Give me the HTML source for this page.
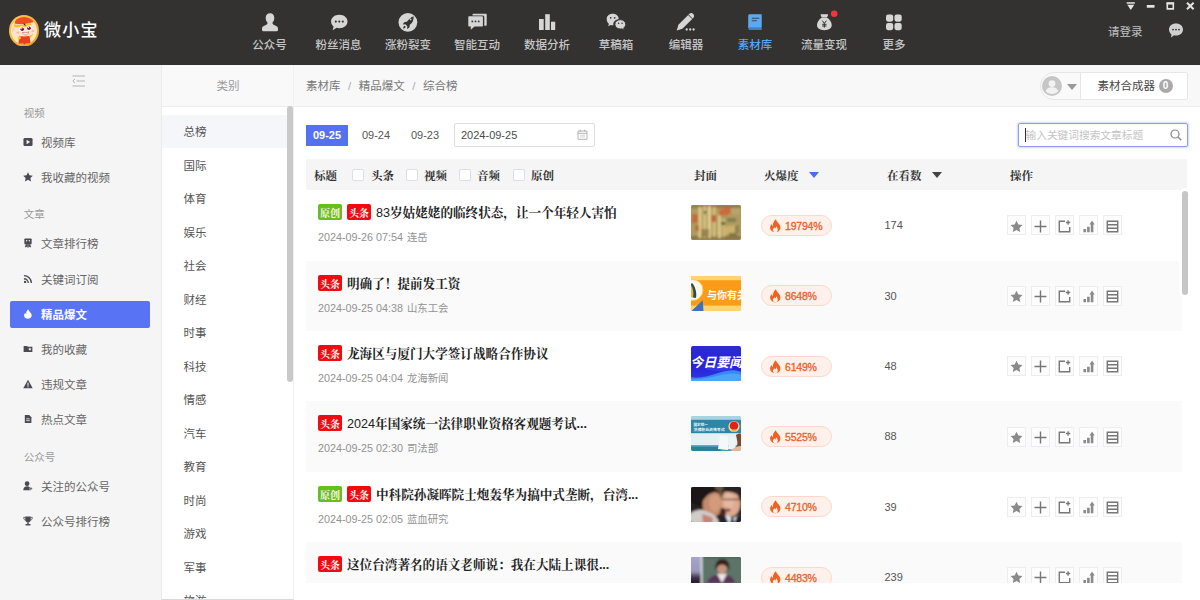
<!DOCTYPE html>
<html lang="zh-CN">
<head>
<meta charset="utf-8">
<title>微小宝</title>
<style>
*{box-sizing:border-box;margin:0;padding:0}
html,body{width:1200px;height:600px;overflow:hidden;background:#fff}
body{font-family:"Liberation Sans","Noto Sans CJK SC",sans-serif;font-size:12px;color:#666;position:relative}
.abs{position:absolute}
/* header */
#hd{position:absolute;z-index:5;left:0;top:0;width:1200px;height:64.500px;background:#333231}
#logo{position:absolute;left:8.5px;top:14.5px;width:30px;height:31.5px}
#brand{position:absolute;left:44px;top:17.500px;font-size:17px;line-height:26px;color:#fff;letter-spacing:1.300px;font-weight:500}
.nav{position:absolute;top:0;width:70px;height:64px;text-align:center;color:#c6c6c6}
.nav svg{position:absolute;left:23px;top:9.5px;width:24px;height:24px}
.nav span{position:absolute;left:-10px;right:-10px;top:36.800px;line-height:16px;font-size:11.5px;font-weight:500}
.nav.on{color:#58a6f6}
#login{position:absolute;left:1108px;top:23px;line-height:18px;color:#c2c2c2;font-size:11.5px}
/* sidebar */
#sb{position:absolute;left:0;top:64px;width:162px;height:536px;background:#f5f5f5}
.sec{position:absolute;left:23.700px;font-size:10.5px;line-height:16px;color:#999;margin-top:0.600px}
.it{position:absolute;left:10px;width:140px;height:27px;line-height:29px;color:#666;font-size:11.5px;padding-left:31px}
.it svg{position:absolute;left:13.400px;top:8px;width:10px;height:10px}
.it.on{background:#5874f5;color:#fff;font-weight:bold;border-radius:2px}
/* category */
#cat{position:absolute;left:161px;top:64px;width:133px;height:535.500px;background:#fff;border-left:1px solid #ebebeb;border-right:1px solid #f0f0f0;border-bottom:1px solid #d9d9d9;overflow:hidden}
#cath{position:absolute;left:0;top:0;width:132px;height:42.500px;background:#f9f9f9;border-bottom:1px solid #ececec;text-align:center;line-height:45px;color:#999;font-size:11.5px}
.c{position:absolute;left:0;width:125px;height:33px;line-height:35px;padding-left:21.500px;color:#555;font-size:11.5px}
.c.on{background:#f5f6fa}
/* main */
#bc{position:absolute;left:294px;top:64px;width:906px;height:42.500px;background:#f8f8f8;border-bottom:1px solid #ececec}
#bc .t{position:absolute;left:12px;top:0;line-height:45px;color:#777;font-size:11.5px}
#bc .t i{font-style:normal;color:#aaa;margin:0 7.500px}
#main{position:absolute;left:294px;top:107px;width:906px;height:493px;background:#fff}

/* breadcrumb right */
#usr{position:absolute;left:746px;top:8px;width:148px;height:28px;border:1px solid #e6e6e6;border-radius:14px 2px 2px 14px;background:#fafafa}
#usr .btn{position:absolute;left:39px;top:0;width:107px;height:26px;background:#fff;border-left:1px solid #e6e6e6;line-height:27px;color:#444;font-size:11.5px;padding-left:16.500px}
#usr .bd{position:absolute;left:77.500px;top:6px;width:14px;height:14px;border-radius:7px;background:#a9a9a9;color:#fff;font-size:10px;line-height:14px;text-align:center;font-weight:bold}
/* toolbar */
.dt{position:absolute;top:18px;height:21px;line-height:21px;font-size:11px;color:#555;text-align:center}
.dt.on{background:#5670f2;color:#fff;font-weight:bold}
#dinp{position:absolute;left:160px;top:16px;width:141px;height:24px;border:1px solid #dedede;border-radius:2px;line-height:23px;padding-left:6px;font-size:11px;color:#4a4a4a}
#sinp{position:absolute;left:724px;top:16px;width:170px;height:24px;border:1px solid #8e9bef;border-radius:2px;line-height:23px;padding-left:6.500px;font-size:10.7px;color:#c4c4c4;box-shadow:0 0 2px 1px rgba(120,140,240,.35)}
#sinp b{position:absolute;left:5.500px;top:4px;width:1px;height:14px;background:#333}
/* table */
#th{position:absolute;left:12px;top:52px;width:881px;height:31px;background:#f5f5f5;line-height:34px;font-family:"Liberation Sans","Noto Serif CJK SC",serif;font-weight:700;color:#333;font-size:11.5px}
#th span{position:absolute;top:0}
#th i{position:absolute;top:10px;width:12px;height:12px;border:1px solid #dcdfe6;border-radius:2px;background:#fff}
#th em{position:absolute;top:13px;width:0;height:0;border-left:5px solid transparent;border-right:5px solid transparent;border-top:6px solid #444}
#rows{position:absolute;left:12px;top:83px;width:875.500px;height:392.500px;overflow:hidden}
.r{position:absolute;left:0;width:875.500px;height:70.35px;background:#fff}
.r.g{background:#fafafa}
.tg{position:absolute;top:14px;width:24px;height:16px;border-radius:2px;color:#fff5ee;font-size:10px;line-height:19px;text-align:center;font-family:"Liberation Sans","Noto Serif CJK SC",serif;font-weight:bold}
.tg.y{background:#69bd1e}
.tg.t{background:#f00a12}
.ti{position:absolute;top:12px;line-height:22px;font-size:12.6px;color:#222;font-family:"Liberation Sans","Noto Serif CJK SC",serif;font-weight:700;white-space:nowrap}
.ti b{font-weight:400}
.me{position:absolute;left:12px;top:39px;line-height:16px;font-size:10.75px;color:#929292;white-space:nowrap}
.me span{font-size:10.4px;margin-left:1px}
.th{position:absolute;left:385px;top:15.200px;width:50px;height:35px;border-radius:2px;overflow:hidden}
.th svg{display:block;width:50px;height:35px}
.fp{position:absolute;left:455px;top:24.800px;width:71px;height:21px;border:1px solid #fbd8ca;border-radius:11px;background:#fef0ea;color:#ea5f28;font-size:10.5px;line-height:21.500px;padding-left:23px;letter-spacing:-0.200px;-webkit-text-stroke:0.300px #ea5f28}
.fp svg{position:absolute;left:7px;top:3px;width:12.500px;height:13.500px}
.vw{position:absolute;left:578.500px;top:27px;line-height:16px;font-size:11px;color:#555}
.op{position:absolute;top:25.300px;width:19.500px;height:20px;border:1px solid #ecedf1;background:#fdfdfd}
.op svg{position:absolute;left:2.300px;top:3.100px;width:13px;height:13px}
#vsb{position:absolute;left:888px;top:83.500px;width:5.500px;height:104px;border-radius:3px;background:#c6c6c6;box-shadow:0 0 0 3px #fff}
#catsb{position:absolute;left:125.200px;top:42.300px;width:5.800px;height:275.400px;border-radius:3px;background:#c9c9c9}
</style>
</head>
<body>
<div id="hd">
  <svg id="logo" viewBox="0 0 30 31.500"><defs><linearGradient id="lg" x1="0" y1="0" x2="1" y2="1"><stop offset="0" stop-color="#fbd051"/><stop offset="1" stop-color="#f39a1a"/></linearGradient><clipPath id="lc"><ellipse cx="15" cy="15.750" rx="13" ry="13.700"/></clipPath></defs><ellipse cx="15" cy="15.750" rx="15" ry="15.750" fill="url(#lg)"/><ellipse cx="15" cy="15.750" rx="13" ry="13.700" fill="#fce8c2"/><g clip-path="url(#lc)"><path d="M10.500 21c0-1.500 2-2.300 5-2.300s5 0.800 5 2.300l1 6.500c0.200 1.500-1 2.500-2 2.500h-8c-1 0-2.200-1-2-2.500z" fill="#e8421c"/><path d="M8.500 22.500l3-1.500 0.500 2.500-2.500 1.500zM20 20.500l3-3 1.500 1.500-3 4z" fill="#f8c62c"/><path d="M11 28.500h3.500v2.500h-4zM16.500 28.500h3.500l0.500 2.500h-4z" fill="#f8c62c"/><ellipse cx="15.200" cy="13.500" rx="11.300" ry="8" fill="#fde3cf"/><ellipse cx="4.300" cy="14.500" rx="1.800" ry="2.200" fill="#fbd3b8"/><path d="M5.500 8.500c1-6 5-8.700 9.500-8.700 5 0 8.500 2.700 9.700 7.200-5 1.800-13 3-19.200 1.500z" fill="#ef4f1e"/><path d="M4.800 9.300c4 1.200 11 0.800 17-1.300l0.700 2.300c-6 2.300-13 2.700-17.500 1.700z" fill="#f8c12c"/><path d="M14.500 8.200c0.800 0.300 2 1 2.300 2.300-1.200 0-2.300-0.500-2.300-2.300z" fill="#3a1608"/><ellipse cx="12.800" cy="14" rx="2.400" ry="2.700" fill="#fff"/><ellipse cx="20.300" cy="13" rx="2.400" ry="2.700" fill="#fff"/><circle cx="13.200" cy="14.200" r="1.800" fill="#7a1420"/><circle cx="20" cy="13.200" r="1.800" fill="#7a1420"/><circle cx="12.700" cy="13.600" r="0.600" fill="#fff"/><circle cx="19.500" cy="12.600" r="0.600" fill="#fff"/><path d="M13.500 17.300c2 0.800 4.500 0.500 6.300-0.500-0.300 2.200-1.800 3.200-3.300 3.200s-2.700-1-3-2.700z" fill="#fff" stroke="#c0392b" stroke-width="0.500"/><ellipse cx="9" cy="17.500" rx="1.600" ry="1" fill="#f9b7a6"/><ellipse cx="24" cy="16" rx="1.500" ry="1" fill="#f9b7a6"/></g></svg>
<div id="brand">微小宝</div>
<div class="nav" style="left:234.5px"><svg viewBox="0 0 24 24"><path d="M12 3.300c2.700 0 4.300 2 4.300 4.800 0 2-0.800 3.700-1.900 4.600 0.200 1.500 1.100 2.200 2.800 2.800 2.100 0.800 2.800 1.700 2.800 3.400v1.200c0 0.700-0.500 1.200-1.200 1.200H5.200c-0.700 0-1.200-0.500-1.200-1.200v-1.200c0-1.700 0.700-2.600 2.800-3.400 1.700-0.600 2.600-1.300 2.800-2.800-1.100-0.900-1.900-2.600-1.900-4.600 0-2.800 1.600-4.800 4.300-4.800z" fill="#d6d6d6"/></svg><span>公众号</span></div>
<div class="nav" style="left:303.5px"><svg viewBox="0 0 24 24"><path d="M12.300 4.800c4.700 0 8.200 2.900 8.200 6.700s-3.500 6.700-8.200 6.700c-1 0-1.900-0.100-2.700-0.400L5.600 20.200l1-3.700C5 15.300 4.100 13.500 4.100 11.500c0-3.800 3.500-6.700 8.200-6.700z" fill="#d6d6d6"/><circle cx="8.800" cy="11.600" r="1.050" fill="#333231"/><circle cx="12.300" cy="11.600" r="1.050" fill="#333231"/><circle cx="15.800" cy="11.600" r="1.050" fill="#333231"/></svg><span>粉丝消息</span></div>
<div class="nav" style="left:373px"><svg viewBox="0 0 24 24"><circle cx="11.900" cy="12.300" r="9.400" fill="#d6d6d6"/><path d="M17.600 6.200c0.300 3.700-1.100 6.500-3.800 8.600l-0.400 2.600-2.200 1.500 0.100-2.700-1.900-1.900-2.700 0.100 1.500-2.200 2.600-0.400c2.100-2.700 4.600-5 6.800-5.600z" fill="#333231"/><path d="M8.700 15.800c-0.900 0.500-1.500 1.500-1.700 2.800 1.300-0.200 2.300-0.800 2.800-1.700z" fill="#333231"/><circle cx="14.600" cy="9.300" r="0.900" fill="#d6d6d6"/></svg><span>涨粉裂变</span></div>
<div class="nav" style="left:442px"><svg viewBox="0 0 24 24"><path d="M8.500 3.700h12.200c0.600 0 1 0.400 1 1v10c0 0.600-0.400 1-1 1h-1.400V7.200c0-0.900-0.700-1.600-1.600-1.600H7.500v-0.900c0-0.600 0.400-1 1-1z" fill="#d6d6d6"/><path d="M4.300 6.300h12.600c0.600 0 1 0.400 1 1v8.200c0 0.600-0.400 1-1 1H9.500l-3.700 3.200v-3.200H4.300c-0.600 0-1-0.400-1-1V7.300c0-0.600 0.400-1 1-1z" fill="#d6d6d6"/><circle cx="7.300" cy="11.400" r="0.900" fill="#333231"/><circle cx="10.500" cy="11.400" r="0.900" fill="#333231"/><circle cx="13.700" cy="11.400" r="0.900" fill="#333231"/></svg><span>智能互动</span></div>
<div class="nav" style="left:512px"><svg viewBox="0 0 24 24"><rect x="4" y="9" width="4.700" height="11" fill="#d6d6d6"/><rect x="10.200" y="4.200" width="4.600" height="15.800" fill="#d6d6d6"/><rect x="16" y="11.700" width="4.200" height="8.300" fill="#d6d6d6"/></svg><span>数据分析</span></div>
<div class="nav" style="left:581px"><svg viewBox="0 0 24 24"><path d="M8.700 3.700c3.400 0 6 2.200 6 5.200 0 0.100 0 0.300 0 0.400-3.300 0.300-5.400 2.500-5.400 5 0 0.300 0 0.600 0.100 0.900-0.200 0-0.500 0-0.700 0-0.700 0-1.400-0.100-2.100-0.300L4.200 16.200l0.700-2.400C3.500 12.700 2.700 11 2.700 8.900c0-3 2.600-5.200 6-5.200z" fill="#d6d6d6"/><path d="M16.300 9.700c3 0 5.400 2 5.400 4.600 0 1.500-0.800 2.800-2 3.600l0.500 2.300-2.300-1.400c-0.500 0.100-1.100 0.200-1.600 0.200-3 0-5.400-2-5.400-4.700 0-2.600 2.400-4.600 5.400-4.600z" fill="#d6d6d6" stroke="#333231" stroke-width="0.900"/><circle cx="6.700" cy="7.800" r="0.850" fill="#333231"/><circle cx="10.700" cy="7.800" r="0.850" fill="#333231"/><circle cx="14.600" cy="13.300" r="0.750" fill="#333231"/><circle cx="18.100" cy="13.300" r="0.750" fill="#333231"/></svg><span>草稿箱</span></div>
<div class="nav" style="left:651px"><svg viewBox="0 0 24 24"><path d="M2.700 20.400l1.700-5.600L15.200 4c1.200-1.200 3-1.200 4.100-0.100 1.100 1.100 1.100 2.900-0.100 4.100L8.400 18.800z" fill="#d6d6d6"/><path d="M14.400 4.800l4 4" stroke="#333231" stroke-width="1"/><circle cx="12.700" cy="19.500" r="1.150" fill="#d6d6d6"/><circle cx="16.200" cy="19.500" r="1.150" fill="#d6d6d6"/><circle cx="19.600" cy="19.500" r="1.150" fill="#d6d6d6"/></svg><span>编辑器</span></div>
<div class="nav on" style="left:720px"><svg viewBox="0 0 24 24"><path d="M6.700 4.200h12v13.600H6.900c-0.900 0-1.700 0.500-1.700 1.200V5.700c0-0.900 0.700-1.500 1.500-1.500z" fill="#5aa9f5"/><path d="M6.900 18.200h11.800v1.600H6.900c-0.900 0-1.500-0.300-1.500-0.800s0.600-0.800 1.500-0.800z" fill="#4a98e8"/><path d="M8.800 8.300h7.400M8.800 10.800h5" stroke="#2d4a6a" stroke-width="1.100"/></svg><span>素材库</span></div>
<div class="nav" style="left:789px"><svg viewBox="0 0 24 24" style="overflow:visible"><path d="M9.200 4.200h6.300c0.500 0 0.800 0.500 0.600 0.900l-1.100 2.300H9.700L8.600 5.100c-0.200-0.400 0.100-0.900 0.600-0.900z" fill="#d6d6d6"/><path d="M9.700 7.800h5.300c2.800 1.500 4.700 4.400 4.700 7.300 0 3.300-2.600 5.100-7.350 5.100S5 18.400 5 15.100c0-2.900 1.900-5.800 4.700-7.300z" fill="#d6d6d6"/><path d="M10.300 10.700l2.050 2.600 2.050-2.600M12.350 13.300v4.300M10.200 14.300h4.300M10.200 16h4.300" stroke="#333231" stroke-width="1" fill="none"/><circle cx="22.200" cy="3.700" r="3.300" fill="#f2353a"/></svg><span>流量变现</span></div>
<div class="nav" style="left:859px"><svg viewBox="0 0 24 24"><rect x="4" y="4.500" width="7.200" height="7.200" rx="2.100" fill="#d6d6d6"/><rect x="12.500" y="4.500" width="7.200" height="7.200" rx="2.100" fill="#d6d6d6"/><rect x="4" y="13" width="7.200" height="7.200" rx="2.100" fill="#d6d6d6"/><rect x="12.500" y="13" width="7.200" height="7.200" rx="2.100" fill="#d6d6d6"/></svg><span>更多</span></div>
<svg style="position:absolute;left:1124px;top:0;width:76px;height:12px" viewBox="0 0 76 12"><rect x="2.700" y="2.200" width="8.100" height="1.500" fill="#e4e4e4"/><path d="M3.300 4.800h7l-3.500 5.200z" fill="#e4e4e4"/><rect x="22.800" y="5" width="7.700" height="2.700" fill="#e4e4e4"/><path d="M43.300 3.500h6v5.400h-6z" stroke="#e4e4e4" stroke-width="1.600" fill="none"/><rect x="42.500" y="2.200" width="7.600" height="2.200" fill="#e4e4e4"/><path d="M63 2.700l6.600 6.600M69.600 2.700l-6.600 6.600" stroke="#e4e4e4" stroke-width="2" fill="none"/></svg>
<svg style="position:absolute;left:1167px;top:22px;width:18px;height:18px" viewBox="0 0 18 18"><path d="M9 1.500c4.200 0 7 2.600 7 6s-2.800 6-7 6c-0.700 0-1.300-0.100-1.900-0.200L4 15.500l0.500-3C3 11.400 2 9.600 2 7.500c0-3.400 2.800-6 7-6z" fill="#d0d0d0"/><circle cx="6" cy="7.600" r="0.900" fill="#333231"/><circle cx="9" cy="7.600" r="0.900" fill="#333231"/><circle cx="12" cy="7.600" r="0.900" fill="#333231"/></svg>
  <div id="login">请登录</div>
</div>
<div id="sb">
<svg style="position:absolute;left:72px;top:11px;width:14px;height:12px" viewBox="0 0 14 12"><path d="M0.500 1h12.500M4.500 6h8.500M0.500 11h12.500" stroke="#b4b4b4" stroke-width="1.100" fill="none"/><path d="M3 4l-2.200 2 2.200 2" stroke="#b4b4b4" stroke-width="1" fill="none"/></svg>
<div class="sec" style="top:40px">视频</div>
<div class="it" style="top:65px"><svg viewBox="0 0 11 11"><rect x="0.500" y="1" width="10" height="9" rx="1.500" fill="#4a4a50"/><path d="M3.900 2.900v5.200l4-2.600z" fill="#f5f5f5"/></svg>视频库</div>
<div class="it" style="top:100px"><svg viewBox="0 0 11 11"><path d="M5.500 0.300l1.600 3.400 3.700 0.500-2.700 2.500 0.700 3.700L5.500 8.600 2.200 10.400l0.700-3.700L0.200 4.200l3.700-0.500z" fill="#4a4a50"/></svg>我收藏的视频</div>
<div class="sec" style="top:141px">文章</div>
<div class="it" style="top:166px"><svg viewBox="0 0 11 11"><rect x="1.500" y="0.500" width="8" height="6.500" rx="1" fill="#4a4a50"/><circle cx="4" cy="3" r="0.800" fill="#f5f5f5"/><circle cx="7" cy="3" r="0.800" fill="#f5f5f5"/><path d="M3 7l-1 3.500 2-1 1 1.500 0.500-4zM8 7l1 3.500-2-1-1 1.500-0.500-4z" fill="#4a4a50"/></svg>文章排行榜</div>
<div class="it" style="top:202px"><svg viewBox="0 0 11 11"><circle cx="2.300" cy="8.700" r="1.300" fill="#4a4a50"/><path d="M1 5.200c2.700 0 4.800 2.100 4.800 4.800M1 1.800c4.500 0 8.200 3.700 8.200 8.200" stroke="#4a4a50" stroke-width="1.500" fill="none"/></svg>关键词订阅</div>
<div class="it on" style="top:237px"><svg viewBox="0 0 11 11"><path d="M5.800 0.300c0.300 1.500 1.300 2.300 2.300 3.500 1.200 1.400 1.700 2.700 1.300 4.100-0.400 1.700-2 2.800-4 2.800-2.200 0-3.900-1.300-4.100-3.100C1.100 6.200 1.700 5.100 2.500 4.200c0.100 0.800 0.400 1.400 1 1.700C3.300 3.700 4.200 1.600 5.800 0.300z" fill="#fff"/></svg>精品爆文</div>
<div class="it" style="top:272px"><svg viewBox="0 0 11 11"><path d="M0.700 2.200h3.800l0.800 0.900h5v5.800H0.700z" fill="#4a4a50"/><path d="M7.600 3.900l0.600 1.100 1.200 0.200-0.900 0.800 0.200 1.200-1.100-0.600-1.100 0.600 0.200-1.200-0.900-0.800 1.200-0.200z" fill="#f5f5f5"/></svg>我的收藏</div>
<div class="it" style="top:307px"><svg viewBox="0 0 11 11"><path d="M5.500 0.800l5.200 9.400H0.300z" fill="#4a4a50"/><path d="M5.500 4v3.300" stroke="#f5f5f5" stroke-width="1.200"/><circle cx="5.500" cy="8.600" r="0.700" fill="#f5f5f5"/></svg>违规文章</div>
<div class="it" style="top:342px"><svg viewBox="0 0 11 11"><path d="M2 1.200h4.800l2.400 2.400v6.200H2z" fill="#4a4a50"/><path d="M3.600 5.300h3.800M3.600 7.300h3.800" stroke="#f5f5f5" stroke-width="0.900"/></svg>热点文章</div>
<div class="sec" style="top:384px">公众号</div>
<div class="it" style="top:409px"><svg viewBox="0 0 11 11"><circle cx="4.500" cy="3" r="2.600" fill="#4a4a50"/><path d="M0.300 10.300c0-3 1.800-4.500 4.200-4.500s4.200 1.500 4.200 4.500z" fill="#4a4a50"/><path d="M8.800 6.300l0.600 1.200 1.300 0.200-0.900 0.900 0.200 1.300-1.200-0.600-1.200 0.600 0.200-1.300-0.900-0.900 1.300-0.200z" fill="#4a4a50" stroke="#f5f5f5" stroke-width="0.500"/></svg>关注的公众号</div>
<div class="it" style="top:444px"><svg viewBox="0 0 11 11"><path d="M2.500 0.500h6v3.500c0 1.800-1.300 3-3 3s-3-1.200-3-3z" fill="#4a4a50"/><path d="M2.500 1.500H0.800c0 2 0.700 3 2.200 3.200M8.500 1.500h1.700c0 2-0.700 3-2.200 3.200" stroke="#4a4a50" stroke-width="0.900" fill="none"/><rect x="4.700" y="6.800" width="1.600" height="2" fill="#4a4a50"/><rect x="2.800" y="8.800" width="5.400" height="1.600" fill="#4a4a50"/></svg>公众号排行榜</div>
</div>
<div id="cat"><div id="cath">类别</div>
<div id="catl"><div class="c on" style="top:51.0px">总榜</div><div class="c" style="top:84.5px">国际</div><div class="c" style="top:118.0px">体育</div><div class="c" style="top:151.5px">娱乐</div><div class="c" style="top:185.0px">社会</div><div class="c" style="top:218.5px">财经</div><div class="c" style="top:252.0px">时事</div><div class="c" style="top:285.5px">科技</div><div class="c" style="top:319.0px">情感</div><div class="c" style="top:352.5px">汽车</div><div class="c" style="top:386.0px">教育</div><div class="c" style="top:419.5px">时尚</div><div class="c" style="top:453.0px">游戏</div><div class="c" style="top:486.5px">军事</div><div class="c" style="top:520.0px">旅游</div></div>
<div id="catsb"></div></div>
<div id="bc"><div class="t">素材库<i>/</i>精品爆文<i>/</i>综合榜</div>
<div id="usr"><svg style="position:absolute;left:1px;top:3px;width:20px;height:20px" viewBox="0 0 20 20"><circle cx="10" cy="10" r="10" fill="#c6c6c6"/><circle cx="10" cy="7.6" r="3.4" fill="#f2f2f2"/><path d="M3.8 15.6c0.6-3.2 3-4.3 6.2-4.3s5.600 1.100 6.200 4.300c-1.700 1.500-3.600 2.300-6.200 2.300s-4.500-0.800-6.200-2.300z" fill="#f2f2f2"/></svg><svg style="position:absolute;left:26px;top:11px;width:10px;height:6px" viewBox="0 0 10 6"><path d="M0 0h10L5 6z" fill="#999"/></svg>
<div class="btn">素材合成器<div class="bd">0</div></div></div></div>
<div id="main">
<div class="dt on" style="left:12px;width:42px">09-25</div>
<div class="dt" style="left:62px;width:40px">09-24</div>
<div class="dt" style="left:111px;width:40px">09-23</div>
<div id="dinp">2024-09-25<svg style="position:absolute;left:122px;top:5px;width:11px;height:11px" viewBox="0 0 11 11"><path d="M1 2h9v8.3H1zM1 4.3h9M3.3 0.6v2.4M7.7 0.6v2.4" stroke="#b4b4b4" stroke-width="1" fill="none"/><path d="M3 6.2h5M3 8h5" stroke="#c8c8c8" stroke-width="0.8"/></svg></div>
<div id="sinp"><b></b>输入关键词搜索文章标题<svg style="position:absolute;left:151px;top:5px;width:12px;height:12px" viewBox="0 0 12 12"><circle cx="5" cy="5" r="4" stroke="#888" stroke-width="1.2" fill="none"/><path d="M8 8l3.3 3.3" stroke="#888" stroke-width="1.3"/></svg></div>
<div id="th"><span style="left:8px">标题</span><i style="left:46px"></i><span style="left:65px">头条</span><i style="left:100px"></i><span style="left:118px">视频</span><i style="left:153px"></i><span style="left:171px">音频</span><i style="left:207px"></i><span style="left:225px">原创</span><span style="left:388px">封面</span><span style="left:458px">火爆度</span><em style="left:503px;border-top-color:#4a6cf0"></em><span style="left:581px">在看数</span><em style="left:626px"></em><span style="left:704px">操作</span></div>
<div id="rows">
<div class="r" style="top:0.2px"><div class="tg y" style="left:12px">原创</div><div class="tg t" style="left:41px">头条</div><div class="ti" style="left:70px"><b>83</b>岁姑姥姥的临终状态，让一个年轻人害怕</div><div class="me">2024-09-26 07:54 <span>连岳</span></div><div class="th"><svg viewBox="0 0 50 35"><defs><filter id="b1" x="-10%" y="-10%" width="120%" height="120%"><feGaussianBlur stdDeviation="0.800"/></filter></defs><rect width="50" height="35" fill="#a8905a"/><g filter="url(#b1)"><rect x="-4" y="-4" width="58" height="43" fill="#b09a5e"/><rect x="0" y="0" width="50" height="3" fill="#8f7a44"/><rect x="0" y="31" width="50" height="4" fill="#8a7446"/><rect x="7.500" y="2" width="3" height="31" fill="#dccb8c"/><rect x="12.500" y="1" width="2.500" height="32" fill="#d8c584"/><rect x="17" y="1" width="2.800" height="32" fill="#e2d294"/><rect x="22" y="2" width="2.500" height="30" fill="#d6c280"/><rect x="27" y="9" width="3" height="24" fill="#d9c788"/><rect x="31.500" y="14" width="2.500" height="18" fill="#cdb976"/><path d="M1 9h6v9H1z" fill="#c46a3a"/><path d="M28 5l10-3 5 3-6 5-9 1z" fill="#cc6a3c"/><rect x="20" y="10" width="5" height="7" fill="#c0683c"/><rect x="4" y="20" width="4" height="6" fill="#b8703f"/><rect x="36" y="13" width="9" height="4" fill="#7f8050"/><rect x="40" y="3" width="9" height="6" fill="#b5a66a"/><path d="M33 22l15-3v8l-14 3z" fill="#cdb06a"/><rect x="38" y="28" width="8" height="3" fill="#7d7648"/><rect x="44" y="20" width="4" height="8" fill="#8a8450"/><rect x="10" y="24" width="8" height="8" fill="#9a8350"/><rect x="13" y="6" width="2" height="3" fill="#5c5a36"/><rect x="30" y="17" width="4" height="3" fill="#59633c"/></g></svg></div><div class="fp"><svg viewBox="0 0 12 13"><path d="M6.6 0.2C7 2 8.2 3 9.3 4.4 10.6 6 11.2 7.6 10.8 9.4 10.3 11.5 8.4 12.8 6 12.8 3.4 12.8 1.4 11.2 1.1 9 0.9 7.3 1.6 6 2.6 4.9 2.7 5.9 3.1 6.6 3.8 7 3.5 4.3 4.6 1.8 6.6 0.2Z" fill="#f0611f"/><path d="M6 12.8C4.6 12.8 3.7 11.9 3.7 10.7 3.7 9.6 4.5 8.9 5.2 8 5.5 8.7 5.9 9 6.4 9.2 6.4 8.3 6.7 7.6 7.3 7 7.5 8 8.4 8.8 8.4 10.3 8.4 11.8 7.4 12.8 6 12.8Z" fill="#fef0ea"/></svg>19794%</div><div class="vw">174</div><div class="op" style="left:700.7px"><svg viewBox="0 0 12 12"><path d="M6 0.6l1.7 3.5 3.8 0.5-2.8 2.7 0.7 3.8L6 9.3 2.6 11.1l0.7-3.8L0.5 4.6l3.8-0.5z" fill="#8a8a8a"/></svg></div><div class="op" style="left:724.7px"><svg viewBox="0 0 12 12"><path d="M6 0.5v11M0.5 6h11" stroke="#777" stroke-width="1.3" fill="none"/></svg></div><div class="op" style="left:748.7px"><svg viewBox="0 0 12 12"><path d="M6.5 1.2H1.2v9.6h9.6V6.5" stroke="#777" stroke-width="1.3" fill="none"/><path d="M9.3 0.3v4M7.3 2.3h4" stroke="#777" stroke-width="1.2" fill="none"/></svg></div><div class="op" style="left:772.7px"><svg viewBox="0 0 12 12"><path d="M1.300 8.300h2.400V11.300H1.300zM4.700 6.300h2.400v5H4.700zM8.100 3.500h2.400v7.800H8.100z" fill="#8a8a8a"/><path d="M9.300 0.500l2.400 3.600h-4.800z" fill="#8a8a8a"/></svg></div><div class="op" style="left:796.7px"><svg viewBox="0 0 12 12"><path d="M1.2 1.2h9.6v9.6H1.2zM1.2 4.4h9.6M1.2 7.6h9.6" stroke="#777" stroke-width="1.3" fill="none"/></svg></div></div>
<div class="r g" style="top:70.55px"><div class="tg t" style="left:12px">头条</div><div class="ti" style="left:41px">明确了！提前发工资</div><div class="me">2024-09-25 04:38 <span>山东工会</span></div><div class="th"><svg viewBox="0 0 50 35"><rect width="50" height="35" fill="#fb9c18"/><rect x="0" y="0" width="50" height="4.200" fill="#fdd56c"/><rect x="0" y="29.600" width="50" height="5.400" fill="#fdd56c"/><circle cx="1.500" cy="14" r="10.500" fill="#fff8e6"/><circle cx="1.500" cy="14" r="10.500" fill="none" stroke="#fbc84a" stroke-width="1"/><path d="M1 7c3 3 5 9 4 15l-5-1V8z" fill="#1f4f5a"/><path d="M0 9c2 3 3 8 2 12H0z" fill="#e9b33a"/><path d="M0.500 35h12l-0.800-10.800c-3 2.500-7 7-11.200 10.800z" fill="#3c6fc6"/><text x="16" y="23.300" font-size="10" font-weight="bold" fill="#fff" font-family="Liberation Sans,Noto Sans CJK SC,sans-serif">与你有关</text></svg></div><div class="fp"><svg viewBox="0 0 12 13"><path d="M6.6 0.2C7 2 8.2 3 9.3 4.4 10.6 6 11.2 7.6 10.8 9.4 10.3 11.5 8.4 12.8 6 12.8 3.4 12.8 1.4 11.2 1.1 9 0.9 7.3 1.6 6 2.6 4.9 2.7 5.9 3.1 6.6 3.8 7 3.5 4.3 4.6 1.8 6.6 0.2Z" fill="#f0611f"/><path d="M6 12.8C4.6 12.8 3.7 11.9 3.7 10.7 3.7 9.6 4.5 8.9 5.2 8 5.5 8.7 5.9 9 6.4 9.2 6.4 8.3 6.7 7.6 7.3 7 7.5 8 8.4 8.8 8.4 10.3 8.4 11.8 7.4 12.8 6 12.8Z" fill="#fef0ea"/></svg>8648%</div><div class="vw">30</div><div class="op" style="left:700.7px"><svg viewBox="0 0 12 12"><path d="M6 0.6l1.7 3.5 3.8 0.5-2.8 2.7 0.7 3.8L6 9.3 2.6 11.1l0.7-3.8L0.5 4.6l3.8-0.5z" fill="#8a8a8a"/></svg></div><div class="op" style="left:724.7px"><svg viewBox="0 0 12 12"><path d="M6 0.5v11M0.5 6h11" stroke="#777" stroke-width="1.3" fill="none"/></svg></div><div class="op" style="left:748.7px"><svg viewBox="0 0 12 12"><path d="M6.5 1.2H1.2v9.6h9.6V6.5" stroke="#777" stroke-width="1.3" fill="none"/><path d="M9.3 0.3v4M7.3 2.3h4" stroke="#777" stroke-width="1.2" fill="none"/></svg></div><div class="op" style="left:772.7px"><svg viewBox="0 0 12 12"><path d="M1.300 8.300h2.400V11.300H1.300zM4.700 6.300h2.400v5H4.700zM8.100 3.500h2.400v7.800H8.100z" fill="#8a8a8a"/><path d="M9.300 0.500l2.400 3.600h-4.800z" fill="#8a8a8a"/></svg></div><div class="op" style="left:796.7px"><svg viewBox="0 0 12 12"><path d="M1.2 1.2h9.6v9.6H1.2zM1.2 4.4h9.6M1.2 7.6h9.6" stroke="#777" stroke-width="1.3" fill="none"/></svg></div></div>
<div class="r" style="top:140.9px"><div class="tg t" style="left:12px">头条</div><div class="ti" style="left:41px">龙海区与厦门大学签订战略合作协议</div><div class="me">2024-09-25 04:04 <span>龙海新闻</span></div><div class="th"><svg viewBox="0 0 50 35"><defs><linearGradient id="g3" x1="0" y1="0" x2="0" y2="1"><stop offset="0" stop-color="#2a2bd4"/><stop offset="0.600" stop-color="#2a22d8"/><stop offset="1" stop-color="#2b3be0"/></linearGradient></defs><rect width="50" height="35" fill="url(#g3)"/><path d="M0 31c8 2 18-1 27-4s17-4 23-1v9H0z" fill="#3a86f2"/><path d="M0 33c10 1 20-2 30-4s15-2 20 0v6H0z" fill="#4aa6f8"/><ellipse cx="28" cy="22" rx="14" ry="3" fill="#3d3af0" opacity="0.700"/><text x="-0.800" y="20.500" font-size="13" font-weight="bold" font-style="italic" fill="#fff" font-family="Liberation Sans,Noto Sans CJK SC,sans-serif">今日要闻</text></svg></div><div class="fp"><svg viewBox="0 0 12 13"><path d="M6.6 0.2C7 2 8.2 3 9.3 4.4 10.6 6 11.2 7.6 10.8 9.4 10.3 11.5 8.4 12.8 6 12.8 3.4 12.8 1.4 11.2 1.1 9 0.9 7.3 1.6 6 2.6 4.9 2.7 5.9 3.1 6.6 3.8 7 3.5 4.3 4.6 1.8 6.6 0.2Z" fill="#f0611f"/><path d="M6 12.8C4.6 12.8 3.7 11.9 3.7 10.7 3.7 9.6 4.5 8.9 5.2 8 5.5 8.7 5.9 9 6.4 9.2 6.4 8.3 6.7 7.6 7.3 7 7.5 8 8.4 8.8 8.4 10.3 8.4 11.8 7.4 12.8 6 12.8Z" fill="#fef0ea"/></svg>6149%</div><div class="vw">48</div><div class="op" style="left:700.7px"><svg viewBox="0 0 12 12"><path d="M6 0.6l1.7 3.5 3.8 0.5-2.8 2.7 0.7 3.8L6 9.3 2.6 11.1l0.7-3.8L0.5 4.6l3.8-0.5z" fill="#8a8a8a"/></svg></div><div class="op" style="left:724.7px"><svg viewBox="0 0 12 12"><path d="M6 0.5v11M0.5 6h11" stroke="#777" stroke-width="1.3" fill="none"/></svg></div><div class="op" style="left:748.7px"><svg viewBox="0 0 12 12"><path d="M6.5 1.2H1.2v9.6h9.6V6.5" stroke="#777" stroke-width="1.3" fill="none"/><path d="M9.3 0.3v4M7.3 2.3h4" stroke="#777" stroke-width="1.2" fill="none"/></svg></div><div class="op" style="left:772.7px"><svg viewBox="0 0 12 12"><path d="M1.300 8.300h2.400V11.300H1.300zM4.700 6.300h2.400v5H4.700zM8.100 3.500h2.400v7.800H8.100z" fill="#8a8a8a"/><path d="M9.300 0.500l2.400 3.600h-4.800z" fill="#8a8a8a"/></svg></div><div class="op" style="left:796.7px"><svg viewBox="0 0 12 12"><path d="M1.2 1.2h9.6v9.6H1.2zM1.2 4.4h9.6M1.2 7.6h9.6" stroke="#777" stroke-width="1.3" fill="none"/></svg></div></div>
<div class="r g" style="top:211.25px"><div class="tg t" style="left:12px">头条</div><div class="ti" style="left:41px"><b>2024</b>年国家统一法律职业资格客观题考试...</div><div class="me">2024-09-25 02:30 <span>司法部</span></div><div class="th"><svg viewBox="0 0 50 35"><defs><filter id="b4" x="-10%" y="-10%" width="120%" height="120%"><feGaussianBlur stdDeviation="0.600"/></filter></defs><rect width="50" height="35" fill="#8cc0cf"/><g filter="url(#b4)"><rect x="-2" y="-2" width="54" height="6" fill="#a9d3de"/><rect x="-2" y="3.800" width="54" height="13.500" fill="#2f86a6"/><rect x="-2" y="17.300" width="54" height="12" fill="#e3f0f4"/><rect x="-2" y="29.300" width="54" height="8" fill="#4a9ab2"/><path d="M-2 31h30l4 6H-2z" fill="#2f7f98"/><path d="M29 19l8 1v14l-10-1z" fill="#f4f8fa"/><path d="M38 20l8 2-2 12-7-1z" fill="#eef4f6"/><circle cx="43" cy="10.500" r="5.600" fill="#f3dc9a"/><circle cx="43" cy="9.800" r="4.300" fill="#e0241c"/><rect x="40.500" y="13.500" width="5" height="2.500" fill="#e8b93a"/><path d="M45 19c3-2 5-2 6 0v10c-2 2-4 4-6 5 1-4 2-7 1-10z" fill="#7a4a32"/><path d="M40 35c2-3 6-5 11-5v5z" fill="#e3b79a"/></g><text x="2.500" y="9.600" font-size="3.600" font-weight="bold" fill="#e6f3f7" font-family="Liberation Sans,Noto Sans CJK SC,sans-serif">国家统一</text><text x="2.500" y="15" font-size="3.900" font-weight="bold" fill="#e6f3f7" font-family="Liberation Sans,Noto Sans CJK SC,sans-serif">法律职业资格考试</text></svg></div><div class="fp"><svg viewBox="0 0 12 13"><path d="M6.6 0.2C7 2 8.2 3 9.3 4.4 10.6 6 11.2 7.6 10.8 9.4 10.3 11.5 8.4 12.8 6 12.8 3.4 12.8 1.4 11.2 1.1 9 0.9 7.3 1.6 6 2.6 4.9 2.7 5.9 3.1 6.6 3.8 7 3.5 4.3 4.6 1.8 6.6 0.2Z" fill="#f0611f"/><path d="M6 12.8C4.6 12.8 3.7 11.9 3.7 10.7 3.7 9.6 4.5 8.9 5.2 8 5.5 8.7 5.9 9 6.4 9.2 6.4 8.3 6.7 7.6 7.3 7 7.5 8 8.4 8.8 8.4 10.3 8.4 11.8 7.4 12.8 6 12.8Z" fill="#fef0ea"/></svg>5525%</div><div class="vw">88</div><div class="op" style="left:700.7px"><svg viewBox="0 0 12 12"><path d="M6 0.6l1.7 3.5 3.8 0.5-2.8 2.7 0.7 3.8L6 9.3 2.6 11.1l0.7-3.8L0.5 4.6l3.8-0.5z" fill="#8a8a8a"/></svg></div><div class="op" style="left:724.7px"><svg viewBox="0 0 12 12"><path d="M6 0.5v11M0.5 6h11" stroke="#777" stroke-width="1.3" fill="none"/></svg></div><div class="op" style="left:748.7px"><svg viewBox="0 0 12 12"><path d="M6.5 1.2H1.2v9.6h9.6V6.5" stroke="#777" stroke-width="1.3" fill="none"/><path d="M9.3 0.3v4M7.3 2.3h4" stroke="#777" stroke-width="1.2" fill="none"/></svg></div><div class="op" style="left:772.7px"><svg viewBox="0 0 12 12"><path d="M1.300 8.300h2.400V11.300H1.300zM4.700 6.300h2.400v5H4.700zM8.100 3.500h2.400v7.800H8.100z" fill="#8a8a8a"/><path d="M9.300 0.500l2.400 3.600h-4.800z" fill="#8a8a8a"/></svg></div><div class="op" style="left:796.7px"><svg viewBox="0 0 12 12"><path d="M1.2 1.2h9.6v9.6H1.2zM1.2 4.4h9.6M1.2 7.6h9.6" stroke="#777" stroke-width="1.3" fill="none"/></svg></div></div>
<div class="r" style="top:281.6px"><div class="tg y" style="left:12px">原创</div><div class="tg t" style="left:41px">头条</div><div class="ti" style="left:70px">中科院孙凝晖院士炮轰华为搞中式垄断，台湾...</div><div class="me">2024-09-25 02:05 <span>蓝血研究</span></div><div class="th"><svg viewBox="0 0 50 35"><defs><filter id="b5" x="-10%" y="-10%" width="120%" height="120%"><feGaussianBlur stdDeviation="1.100"/></filter></defs><rect width="50" height="35" fill="#332826"/><g filter="url(#b5)"><rect x="-4" y="-4" width="58" height="43" fill="#2c2322"/><rect x="24" y="-2" width="8" height="16" fill="#6a5540"/><ellipse cx="11" cy="8" rx="14" ry="11" fill="#1a1616"/><ellipse cx="21.500" cy="17" rx="10" ry="13" fill="#c48a6c"/><ellipse cx="24" cy="16" rx="6" ry="9" fill="#d39a7c"/><path d="M8 5c5-6 16-6 21 1-6-2-12 0-17 8z" fill="#1c1818"/><path d="M-3 29c4-5 10-7 15-6l8 3c4 2 7 5 8 10H-3z" fill="#d2ccc8"/><path d="M11 27c3 1 8 2 11 4l-1 6h-9z" fill="#c4857c"/><ellipse cx="40" cy="15.500" rx="9.500" ry="14" fill="#dcaa90"/><ellipse cx="38" cy="14" rx="5" ry="8" fill="#e6b8a0"/><path d="M30 5c3-7 16-8 22-1v10c-3-7-11-10-22-9z" fill="#2a2020"/><path d="M46 7c4 1 6 7 5 16-1-6-2-10-5-16z" fill="#3a2a28"/><rect x="31" y="11.800" width="18" height="1.300" fill="#5a3e32"/><ellipse cx="37" cy="23" rx="2.500" ry="1.500" fill="#7a3a34"/><path d="M30 37c0-6 3-9 6-9l6 3 6-3c2 0 4 2 4 9z" fill="#e3e8ee"/><path d="M29 37c0-6 2-8 5-9l4 9zM52 27l-6 2-3 8h9z" fill="#23232c"/><path d="M40 31l2-1 2 7h-5z" fill="#2a2d3a"/><ellipse cx="32" cy="25" rx="3" ry="4" fill="#4a2828"/></g></svg></div><div class="fp"><svg viewBox="0 0 12 13"><path d="M6.6 0.2C7 2 8.2 3 9.3 4.4 10.6 6 11.2 7.6 10.8 9.4 10.3 11.5 8.4 12.8 6 12.8 3.4 12.8 1.4 11.2 1.1 9 0.9 7.3 1.6 6 2.6 4.9 2.7 5.9 3.1 6.6 3.8 7 3.5 4.3 4.6 1.8 6.6 0.2Z" fill="#f0611f"/><path d="M6 12.8C4.6 12.8 3.7 11.9 3.7 10.7 3.7 9.6 4.5 8.9 5.2 8 5.5 8.7 5.9 9 6.4 9.2 6.4 8.3 6.7 7.6 7.3 7 7.5 8 8.4 8.8 8.4 10.3 8.4 11.8 7.4 12.8 6 12.8Z" fill="#fef0ea"/></svg>4710%</div><div class="vw">39</div><div class="op" style="left:700.7px"><svg viewBox="0 0 12 12"><path d="M6 0.6l1.7 3.5 3.8 0.5-2.8 2.7 0.7 3.8L6 9.3 2.6 11.1l0.7-3.8L0.5 4.6l3.8-0.5z" fill="#8a8a8a"/></svg></div><div class="op" style="left:724.7px"><svg viewBox="0 0 12 12"><path d="M6 0.5v11M0.5 6h11" stroke="#777" stroke-width="1.3" fill="none"/></svg></div><div class="op" style="left:748.7px"><svg viewBox="0 0 12 12"><path d="M6.5 1.2H1.2v9.6h9.6V6.5" stroke="#777" stroke-width="1.3" fill="none"/><path d="M9.3 0.3v4M7.3 2.3h4" stroke="#777" stroke-width="1.2" fill="none"/></svg></div><div class="op" style="left:772.7px"><svg viewBox="0 0 12 12"><path d="M1.300 8.300h2.400V11.300H1.300zM4.700 6.300h2.400v5H4.700zM8.100 3.500h2.400v7.800H8.100z" fill="#8a8a8a"/><path d="M9.300 0.500l2.400 3.600h-4.800z" fill="#8a8a8a"/></svg></div><div class="op" style="left:796.7px"><svg viewBox="0 0 12 12"><path d="M1.2 1.2h9.6v9.6H1.2zM1.2 4.4h9.6M1.2 7.6h9.6" stroke="#777" stroke-width="1.3" fill="none"/></svg></div></div>
<div class="r g" style="top:351.95px"><div class="tg t" style="left:12px">头条</div><div class="ti" style="left:41px">这位台湾著名的语文老师说：我在大陆上课很...</div><div class="me">2024-09-25 01:20 <span>语文学习</span></div><div class="th"><svg viewBox="0 0 50 35"><defs><filter id="b6" x="-10%" y="-10%" width="120%" height="120%"><feGaussianBlur stdDeviation="0.900"/></filter><linearGradient id="g6" x1="0" y1="0" x2="0" y2="1"><stop offset="0" stop-color="#a9a6cc"/><stop offset="0.550" stop-color="#9a98bc"/><stop offset="0.750" stop-color="#3c3448"/><stop offset="1" stop-color="#1c1620"/></linearGradient></defs><rect width="50" height="35" fill="#5b7568"/><g filter="url(#b6)"><rect x="-2" y="-2" width="12" height="30" fill="url(#g6)"/><rect x="9.800" y="-2" width="1.800" height="30" fill="#e8e8ee"/><rect x="11.600" y="-2" width="40" height="30" fill="#5b7568"/><rect x="11.600" y="-2" width="40" height="3" fill="#4c6258"/><path d="M16 26c1-5 6-8 10-8h9c4 0 8 3 9 8z" fill="#5c3058"/><path d="M26 17l5 9 5-9z" fill="#ece6e6"/><ellipse cx="31" cy="11.500" rx="4.600" ry="5.500" fill="#c9957a"/><path d="M24.500 13c-1-8 3-11 7-11 5 0 8 4 6.500 12-1-4-3-6-7-6.500-3 0.500-5 2-6.500 5.500z" fill="#36201e"/></g></svg></div><div class="fp"><svg viewBox="0 0 12 13"><path d="M6.6 0.2C7 2 8.2 3 9.3 4.4 10.6 6 11.2 7.6 10.8 9.4 10.3 11.5 8.4 12.8 6 12.8 3.4 12.8 1.4 11.2 1.1 9 0.9 7.3 1.6 6 2.6 4.9 2.7 5.9 3.1 6.6 3.8 7 3.5 4.3 4.6 1.8 6.6 0.2Z" fill="#f0611f"/><path d="M6 12.8C4.6 12.8 3.7 11.9 3.7 10.7 3.7 9.6 4.5 8.9 5.2 8 5.5 8.7 5.9 9 6.4 9.2 6.4 8.3 6.7 7.6 7.3 7 7.5 8 8.4 8.8 8.4 10.3 8.4 11.8 7.4 12.8 6 12.8Z" fill="#fef0ea"/></svg>4483%</div><div class="vw">239</div><div class="op" style="left:700.7px"><svg viewBox="0 0 12 12"><path d="M6 0.6l1.7 3.5 3.8 0.5-2.8 2.7 0.7 3.8L6 9.3 2.6 11.1l0.7-3.8L0.5 4.6l3.8-0.5z" fill="#8a8a8a"/></svg></div><div class="op" style="left:724.7px"><svg viewBox="0 0 12 12"><path d="M6 0.5v11M0.5 6h11" stroke="#777" stroke-width="1.3" fill="none"/></svg></div><div class="op" style="left:748.7px"><svg viewBox="0 0 12 12"><path d="M6.5 1.2H1.2v9.6h9.6V6.5" stroke="#777" stroke-width="1.3" fill="none"/><path d="M9.3 0.3v4M7.3 2.3h4" stroke="#777" stroke-width="1.2" fill="none"/></svg></div><div class="op" style="left:772.7px"><svg viewBox="0 0 12 12"><path d="M1.300 8.300h2.400V11.300H1.300zM4.700 6.300h2.400v5H4.700zM8.100 3.500h2.400v7.800H8.100z" fill="#8a8a8a"/><path d="M9.300 0.500l2.400 3.600h-4.800z" fill="#8a8a8a"/></svg></div><div class="op" style="left:796.7px"><svg viewBox="0 0 12 12"><path d="M1.2 1.2h9.6v9.6H1.2zM1.2 4.4h9.6M1.2 7.6h9.6" stroke="#777" stroke-width="1.3" fill="none"/></svg></div></div>
</div>
<div id="vsb"></div>
</div>
</body>
</html>
